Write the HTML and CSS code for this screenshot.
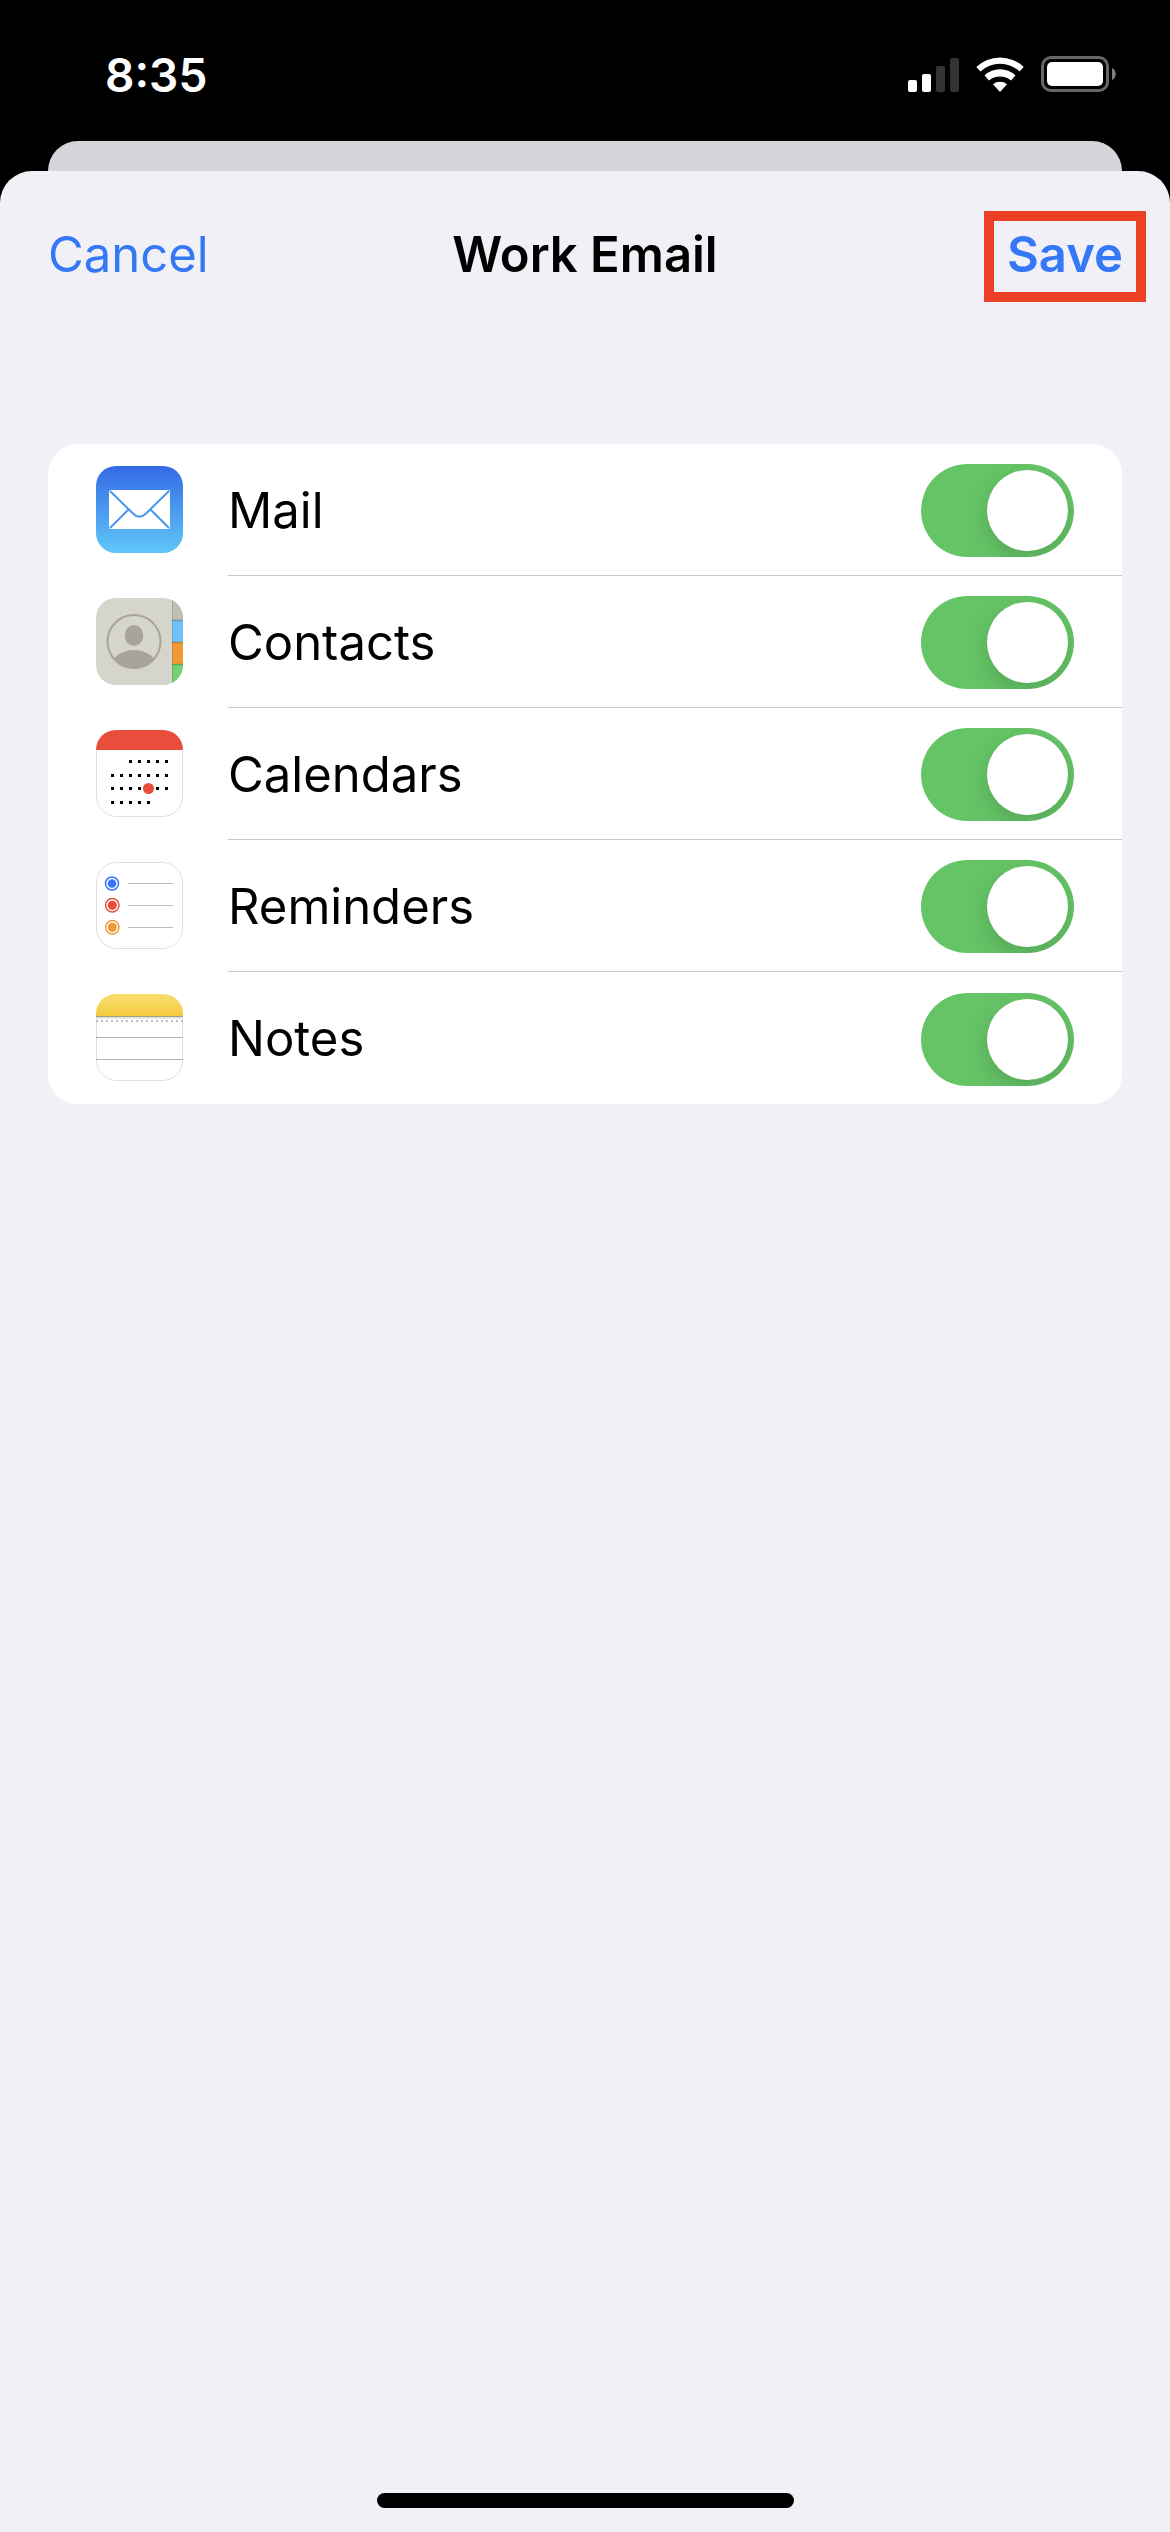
FILE: index.html
```html
<!DOCTYPE html>
<html lang="en">
<head>
  <meta charset="utf-8">
  <meta name="viewport" content="width=device-width, initial-scale=1">
  <title>Work Email</title>
  <link rel="stylesheet" href="styles.css">
</head>
<body>
  <div class="status_bar">
    <span class="status_time">8:35</span>
    <div class="status_icons">
      <svg width="51" height="36" viewBox="0 0 51 36">
        <rect x="0" y="24" width="9" height="12" rx="2" fill="#fff"/>
        <rect x="14" y="18" width="9" height="18" rx="2" fill="#fff"/>
        <rect x="28" y="10" width="9" height="26" rx="2" fill="#333"/>
        <rect x="42" y="2" width="9" height="34" rx="2" fill="#333"/>
      </svg>
      <svg width="48" height="36" viewBox="0 0 48 36" fill="#fff">
        <path d="M0.3 11 A34 34 0 0 1 47.7 11 L43.5 15.4 A28.5 28.5 0 0 0 4.5 15.4 Z"/>
        <path d="M8.5 19.2 A23 23 0 0 1 39.5 19.2 L35.1 24.6 A17 17 0 0 0 12.9 24.6 Z"/>
        <path d="M17 28.2 A11.5 11.5 0 0 1 31 28.2 L24 36 Z"/>
      </svg>
      <svg width="75" height="36" viewBox="0 0 75 36">
        <rect x="1.5" y="1.5" width="65" height="33" rx="8.5" fill="none" stroke="#666" stroke-width="3"/>
        <rect x="6" y="6" width="56" height="24" rx="5" fill="#fff"/>
        <path d="M71 12 C76 14 76 22 71 24 Z" fill="#808080"/>
      </svg>
    </div>
  </div>

  <div class="back_sheet"></div>

  <div class="sheet">
    <header class="nav_bar">
      <button type="button" class="nav_btn btn_cancel">Cancel</button>
      <h1 class="nav_title">Work Email</h1>
      <button type="button" class="nav_btn btn_save">Save</button>
    </header>

    <ul class="list">
      <li class="row">
        <svg class="row_icon" viewBox="0 0 87 87">
          <defs>
            <linearGradient id="mail_bg" x1="0" y1="0" x2="0" y2="1">
              <stop offset="0" stop-color="#356ae6"/>
              <stop offset="1" stop-color="#5fc8f8"/>
            </linearGradient>
          </defs>
          <rect width="87" height="87" fill="url(#mail_bg)"/>
          <rect x="13" y="24" width="61" height="39" rx="1.5" fill="#fff"/>
          <path d="M14 25 L37 47.5 Q43.5 54 50 47.5 L73 25 M14 62 L32 44 M73 62 L55 44" fill="none" stroke="#4796ef" stroke-width="2"/>
        </svg>
        <div class="row_body">
          <label class="row_label" for="sw_mail">Mail</label>
          <input type="checkbox" class="switch" id="sw_mail" checked>
        </div>
      </li>
      <li class="row">
        <svg class="row_icon" viewBox="0 0 87 87">
          <defs>
            <clipPath id="face_clip"><circle cx="38" cy="43.5" r="27"/></clipPath>
          </defs>
          <rect width="87" height="87" fill="#d5d5cb"/>
          <ellipse cx="38" cy="37.5" rx="9.3" ry="10.5" fill="#a8a39d"/>
          <ellipse cx="38" cy="67" rx="22" ry="15" fill="#a8a39d" clip-path="url(#face_clip)"/>
          <circle cx="38" cy="43.5" r="26.5" fill="none" stroke="#a8a39d" stroke-width="2"/>
          <rect x="76" y="0" width="11" height="22" fill="#c0bfb6"/>
          <rect x="76" y="22" width="11" height="22" fill="#74c1f5"/>
          <rect x="76" y="44" width="11" height="22" fill="#f09a37"/>
          <rect x="76" y="66" width="11" height="21" fill="#74d072"/>
          <path d="M76 22.5 H87 M76 44.5 H87 M76 66.5 H87" stroke="#000" stroke-opacity=".2" stroke-width="1.5"/>
          <path d="M76.5 0 V87" stroke="#000" stroke-opacity=".12"/>
        </svg>
        <div class="row_body">
          <label class="row_label" for="sw_contacts">Contacts</label>
          <input type="checkbox" class="switch" id="sw_contacts" checked>
        </div>
      </li>
      <li class="row">
        <svg class="row_icon" viewBox="0 0 87 87">
          <rect x=".5" y=".5" width="86" height="86" rx="20" fill="#fff" stroke="#dedede"/>
          <path d="M0 0 H87 V20 H0 Z" fill="#e94e3d"/>
          <g stroke="#000" stroke-width="3" stroke-dasharray="3 6">
            <path d="M33 31.5 H72"/>
            <path d="M15 45.5 H72"/>
            <path d="M15 58.5 H72"/>
            <path d="M15 72.5 H54"/>
          </g>
          <circle cx="52.5" cy="58.5" r="5.5" fill="#e94e3d"/>
        </svg>
        <div class="row_body">
          <label class="row_label" for="sw_calendars">Calendars</label>
          <input type="checkbox" class="switch" id="sw_calendars" checked>
        </div>
      </li>
      <li class="row">
        <svg class="row_icon" viewBox="0 0 87 87">
          <rect x=".5" y=".5" width="86" height="86" rx="20" fill="#fff" stroke="#dedede"/>
          <g fill="none" stroke-width="1.5">
            <circle cx="16" cy="21.5" r="6.5" stroke="#3478f6"/>
            <circle cx="16.3" cy="43.3" r="6.7" stroke="#e94e3d"/>
            <circle cx="16.3" cy="65.3" r="6.7" stroke="#f09a37"/>
          </g>
          <circle cx="16" cy="21.5" r="4.3" fill="#3478f6"/>
          <circle cx="16.3" cy="43.3" r="4.6" fill="#e94e3d"/>
          <circle cx="16.3" cy="65.3" r="4.6" fill="#f09a37"/>
          <path d="M32 21.5 H77 M32 43.5 H77 M32 65.5 H77" stroke="#bebebe"/>
        </svg>
        <div class="row_body">
          <label class="row_label" for="sw_reminders">Reminders</label>
          <input type="checkbox" class="switch" id="sw_reminders" checked>
        </div>
      </li>
      <li class="row">
        <svg class="row_icon" viewBox="0 0 87 87">
          <defs>
            <linearGradient id="notes_top" x1="0" y1="0" x2="0" y2="1">
              <stop offset="0" stop-color="#f9de70"/>
              <stop offset="1" stop-color="#f5cb3e"/>
            </linearGradient>
          </defs>
          <rect x=".5" y=".5" width="86" height="86" rx="20" fill="#fff" stroke="#dedede"/>
          <rect width="87" height="22" fill="url(#notes_top)"/>
          <rect y="23" width="87" height="2" fill="#e6e6e6"/>
          <path d="M0 22.5 H87" stroke="#a39c80"/>
          <path d="M0 27 H87" stroke="#bdbdbd" stroke-width="2" stroke-dasharray="2 3"/>
          <path d="M0 43.5 H87 M0 65.5 H87" stroke="#b0b0b0"/>
        </svg>
        <div class="row_body">
          <label class="row_label" for="sw_notes">Notes</label>
          <input type="checkbox" class="switch" id="sw_notes" checked>
        </div>
      </li>
    </ul>

    <div class="home_bar"></div>
  </div>
</body>
</html>
```
FILE: styles.css
```css
* {
  box-sizing: border-box;
}
body {
  margin: 0;
  min-height: 100vh;
  display: flex;
  flex-direction: column;
  background-color: #000;
  color: #000;
  font-family: Inter, "Liberation Sans", sans-serif;
  font-size: 49px;
  line-height: 60px;
}

.status_bar {
  height: 141px;
  padding: 45px 54px 0 105px;
  display: flex;
  justify-content: space-between;
  align-items: flex-start;
  color: #fff;
}
.status_time {
  font-size: 46px;
  font-weight: 600;
}
.status_icons {
  display: flex;
  gap: 17px;
  padding-top: 11px;
}

/* edge of the screen under the sheet */
.back_sheet {
  height: 60px;
  margin: 0 48px -30px;
  border-radius: 30px 30px 0 0;
  background-color: #d5d4d9;
  clip-path: inset(0 0 30px 0);
}

.sheet {
  flex: 1;
  display: flex;
  flex-direction: column;
  border-radius: 32px 32px 0 0;
  background-color: #f1f0f6;
}

.nav_bar {
  display: grid;
  grid-template-columns: 1fr auto 1fr;
  align-items: center;
  padding: 40px 24px 0;
}
.nav_title {
  margin: 0;
  padding-bottom: 4px;
  font-size: 49px;
  font-weight: 600;
}
.nav_btn {
  border: 0;
  background: none;
  color: #3478f6;
  font: inherit;
  cursor: pointer;
}
.btn_cancel {
  justify-self: start;
  padding: 0 24px 4px;
}
.btn_save {
  justify-self: end;
  height: 91px;
  padding: 0 13px 4px;
  border: 10px solid #eb4025;
  font-weight: 600;
}

.list {
  list-style: none;
  margin: 142px 48px 0;
  padding: 0;
  border-radius: 30px;
  background-color: #fff;
}
.row {
  display: flex;
  align-items: center;
  gap: 45px;
  padding-left: 48px;
}
.row_icon {
  width: 87px;
  height: 87px;
  margin-bottom: 1px;
  border-radius: 20px;
}
.row_body {
  flex: 1;
  height: 132px;
  display: flex;
  align-items: center;
  justify-content: space-between;
  padding: 2px 48px 0 0;
  border-bottom: 1px solid #c6c6c8;
}
.row:last-child .row_body {
  border-bottom: 0;
}
.row_label {
  flex: 1;
}

.switch {
  appearance: none;
  width: 153px;
  height: 93px;
  margin: 0;
  padding: 6px;
  display: flex;
  border-radius: 47px;
  background-color: #e9e9ea;
  overflow: hidden;
  cursor: pointer;
}
.switch::before {
  content: "";
  width: 81px;
  height: 81px;
  border-radius: 50%;
  background-color: #fff;
  box-shadow: 0 9px 24px rgba(0, 0, 0, .15);
}
.switch:checked {
  justify-content: flex-end;
  background-color: #65c466;
}

.home_bar {
  width: 417px;
  height: 15px;
  margin: auto auto 24px;
  border-radius: 8px;
  background-color: #000;
}
```
